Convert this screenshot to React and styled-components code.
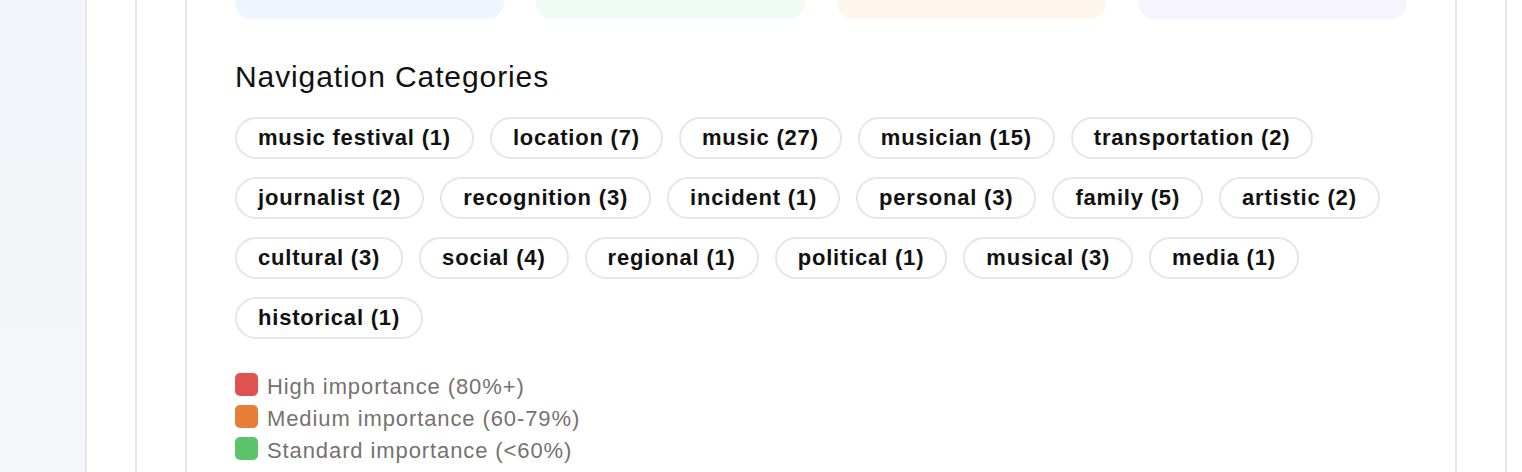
import styled, { createGlobalStyle } from "styled-components";

const GlobalStyle = createGlobalStyle`
  html, body {
    margin: 0;
    padding: 0;
    height: 100%;
    overflow: hidden;
  }
  body {
    font-family: "Liberation Sans", Arial, sans-serif;
  }
`;

const Page = styled.div`
  display: flex;
  height: 472px;
  padding-left: 85px;
  background: linear-gradient(180deg, #f2f5f9 0%, #f5f6fa 100%);
  overflow: hidden;
`;

const Frame = styled.div`
  flex-shrink: 0;
  display: flex;
  padding: 0 48px;
  background: #fff;
  border-left: 2px solid #e6e6e6;
  border-right: 2px solid #e6e6e6;
`;

const Content = styled.div`
  width: 1172px;
  display: flex;
  flex-direction: column;
`;

const StatRow = styled.div`
  display: grid;
  grid-template-columns: repeat(4, 1fr);
  gap: 32px;
`;

const StatCard = styled.div`
  height: 19px;
  border-radius: 0 0 16px 16px;
  background: ${(p) => p.$bg};
`;

const Title = styled.h2`
  margin: 40px 0 22px;
  font-size: 30px;
  font-weight: 400;
  letter-spacing: 0.9px;
  line-height: 36px;
  color: #111;
`;

const TagList = styled.div`
  display: flex;
  flex-wrap: wrap;
  gap: 18px 16px;
`;

const Tag = styled.button`
  height: 42px;
  padding: 0 21px;
  border: 2px solid #e6e6e6;
  border-radius: 999px;
  background: #fff;
  font-family: "Liberation Sans", Arial, sans-serif;
  font-size: 22px;
  font-weight: 700;
  letter-spacing: 0.8px;
  color: #111;
  cursor: pointer;
`;

const Legend = styled.div`
  margin-top: 32px;
  display: flex;
  flex-direction: column;
`;

const LegendItem = styled.div`
  display: flex;
  align-items: center;
  gap: 9px;
  height: 32px;
  font-size: 22px;
  letter-spacing: 0.9px;
  color: #77716f;
`;

const Swatch = styled.span`
  flex-shrink: 0;
  width: 23px;
  height: 23px;
  border-radius: 5px;
  background: ${(p) => p.$color};
  margin-top: -5px;
`;

const cards = ["#eef5fd", "#f0fbf3", "#fef6ec", "#f6f4fe"];

const categories = [
  ["music festival", 1],
  ["location", 7],
  ["music", 27],
  ["musician", 15],
  ["transportation", 2],
  ["journalist", 2],
  ["recognition", 3],
  ["incident", 1],
  ["personal", 3],
  ["family", 5],
  ["artistic", 2],
  ["cultural", 3],
  ["social", 4],
  ["regional", 1],
  ["political", 1],
  ["musical", 3],
  ["media", 1],
  ["historical", 1],
];

const legend = [
  ["#e05252", "High importance (80%+)"],
  ["#e87d37", "Medium importance (60-79%)"],
  ["#5cc46a", "Standard importance (<60%)"],
];

const App = () => {
  return (
    <>
      <GlobalStyle />
      <Page>
        <Frame>
          <Frame>
            <Frame>
              <Content>
                <StatRow>
                  {cards.map((c) => (
                    <StatCard key={c} $bg={c} />
                  ))}
                </StatRow>
                <Title>Navigation Categories</Title>
                <TagList>
                  {categories.map(([name, count]) => (
                    <Tag key={name}>
                      {name} ({count})
                    </Tag>
                  ))}
                </TagList>
                <Legend>
                  {legend.map(([color, label]) => (
                    <LegendItem key={label}>
                      <Swatch $color={color} />
                      {label}
                    </LegendItem>
                  ))}
                </Legend>
              </Content>
            </Frame>
          </Frame>
        </Frame>
      </Page>
    </>
  );
};

export default App;
